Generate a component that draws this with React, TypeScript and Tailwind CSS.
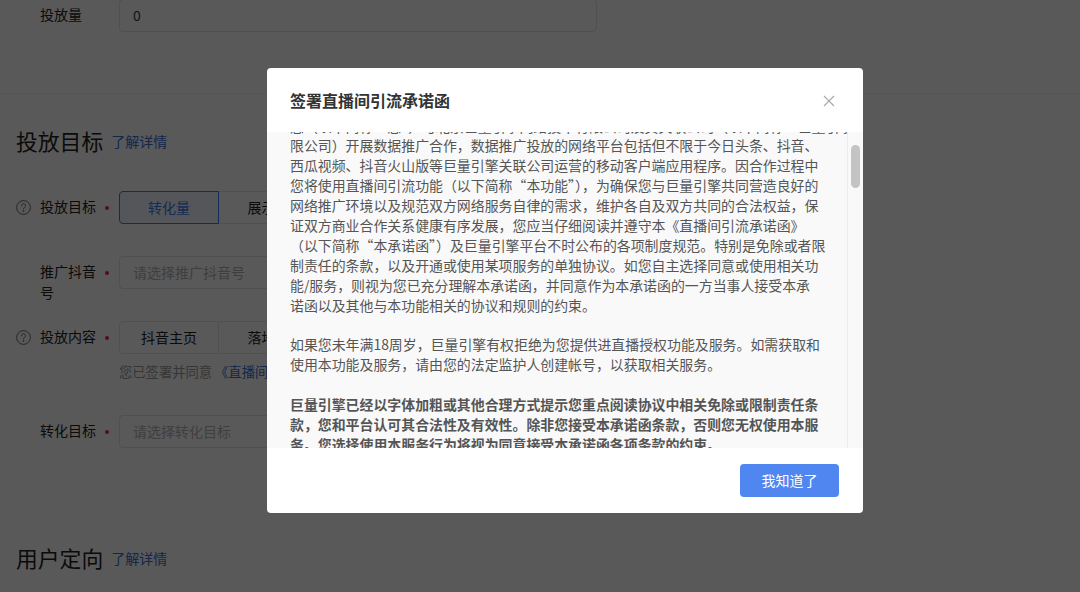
import React from "react";

const font = { fontFamily: '"Noto Sans CJK SC", "Noto Sans", sans-serif' };

const Q = () => (
  <svg width="15" height="15" viewBox="0 0 15 15" fill="none" stroke="#6f6f6f" strokeWidth="1" className="shrink-0">
    <circle cx="7.5" cy="7.5" r="6.9" />
    <path d="M5.4 5.9c0-1.2.9-2.1 2.1-2.1s2.1.8 2.1 1.9c0 1.5-2.1 1.5-2.1 3.2" strokeLinecap="round" />
    <circle cx="7.5" cy="11" r=".5" fill="#6f6f6f" />
  </svg>
);

function Row({ help, label, children, className, noDot }: { help?: boolean; label: string; children: React.ReactNode; className?: string; noDot?: boolean }) {
  return (
    <div className={"flex items-start h-[33px] " + (className ?? "")}>
      <div className="w-6 h-[33px] flex items-center">{help && <Q />}</div>
      <div className="w-[57px] text-[14px] leading-[21px] pt-[5px] text-[#222]">{label}</div>
      <div className="w-[22px] h-[33px] flex items-center">
        {!noDot && <span className="ml-2 w-[4px] h-[4px] rounded-full bg-[#e0284a]" />}
      </div>
      {children}
    </div>
  );
}

const Seg = ({ a, b, active }: { a: string; b: string; active?: boolean }) => (
  <div className="flex w-[478px] h-[33px] text-[14px] text-[#222]">
    <div className={active ? "w-[100px] flex items-center justify-center rounded-l-[4px] border border-[#3a7bf0] text-[#3a7bf0] bg-[#f2f6ff]" : "w-[100px] flex items-center justify-center rounded-l-[4px] border border-[#e4e4e4]"}>{a}</div>
    <div className="w-[100px] flex items-center justify-center border border-l-0 border-[#e4e4e4]">{b}</div>
  </div>
);

const Input = ({ text, value }: { text: string; value?: boolean }) => (
  <div className={"w-[478px] h-[33px] flex items-center px-[13px] rounded-[4px] border border-[#e4e4e4] text-[14px] " + (value ? "text-[#333]" : "text-[#b4b4b4]")}>{text}</div>
);

const Heading = ({ text, className }: { text: string; className?: string }) => (
  <div className={"flex items-center h-[30px] " + (className ?? "")}>
    <span className="text-[21.8px] leading-[30px] text-[#222]">{text}</span>
    <span className="ml-[8px] text-[14px] text-[#3a6fd8]">了解详情</span>
  </div>
);

const p1 = [
  "限公司）开展数据推广合作，数据推广投放的网络平台包括但不限于今日头条、抖音、",
  "西瓜视频、抖音火山版等巨量引擎关联公司运营的移动客户端应用程序。因合作过程中",
  "您将使用直播间引流功能（以下简称“本功能”），为确保您与巨量引擎共同营造良好的",
  "网络推广环境以及规范双方网络服务自律的需求，维护各自及双方共同的合法权益，保",
  "证双方商业合作关系健康有序发展，您应当仔细阅读并遵守本《直播间引流承诺函》",
  "（以下简称“本承诺函”）及巨量引擎平台不时公布的各项制度规范。特别是免除或者限",
  "制责任的条款，以及开通或使用某项服务的单独协议。如您自主选择同意或使用相关功",
  "能/服务，则视为您已充分理解本承诺函，并同意作为本承诺函的一方当事人接受本承",
  "诺函以及其他与本功能相关的协议和规则的约束。",
];
const p2 = [
  "如果您未年满18周岁，巨量引擎有权拒绝为您提供进直播授权功能及服务。如需获取和",
  "使用本功能及服务，请由您的法定监护人创建帐号，以获取相关服务。",
];
const p3 = [
  "巨量引擎已经以字体加粗或其他合理方式提示您重点阅读协议中相关免除或限制责任条",
  "款，您和平台认可其合法性及有效性。除非您接受本承诺函条款，否则您无权使用本服",
  "务。您选择使用本服务行为将视为同意接受本承诺函各项条款的约束。",
];

const Lines = ({ lines, className }: { lines: string[]; className?: string }) => (
  <div className={className}>
    {lines.map((l) => (
      <div key={l} className="whitespace-nowrap">{l}</div>
    ))}
  </div>
);

export default function App() {
  return (
    <div style={font} className="relative w-[1080px] h-[592px] overflow-hidden bg-white">
      <div className="-mt-px pl-4">
        <div className="h-[95px] border-b border-[#f0f0f0] -ml-4 pl-4">
          <Row label="投放量" noDot>
            <Input text="0" value />
          </Row>
        </div>
        <Heading text="投放目标" className="mt-[32px]" />
        <Row help label="投放目标" className="mt-[35px]"><Seg a="转化量" b="展示量" active /></Row>
        <Row label="推广抖音号" className="mt-8"><Input text="请选择推广抖音号" /></Row>
        <Row help label="投放内容" className="mt-8"><Seg a="抖音主页" b="落地页" /></Row>
        <div className="ml-[103px] mt-[8px] h-[20px] text-[13.3px] leading-[20px] text-[#9a9a9a] whitespace-nowrap">
          您已签署并同意<span className="ml-[3px] text-[#3a6fd8]">《直播间引流承诺函》</span>
        </div>
        <Row label="转化目标" className="mt-[33px]"><Input text="请选择转化目标" /></Row>
        <Heading text="用户定向" className="mt-[95px]" />
      </div>

      <div className="absolute inset-0 bg-black/65">
        <div className="ml-[267px] mt-[68px] w-[596px] h-[445px] rounded-[4px] bg-white flex flex-col overflow-hidden">
          <div className="h-16 shrink-0 flex items-center justify-between pl-[23px] pr-[28px]">
            <span className="text-[16px] font-bold text-[#333]">签署直播间引流承诺函</span>
            <svg width="12" height="12" viewBox="0 0 12 12" stroke="#a8a8a8" strokeWidth="1.1" className="mt-[2px]">
              <path d="M1 1l10 10M11 1L1 11" />
            </svg>
          </div>
          <div className="flex h-[316px] shrink-0 bg-[#f9f9f9] overflow-hidden">
            <div className="flex-1 overflow-hidden pl-[23px] -mt-[16px] text-[13.92px] leading-[20px] text-[#555]">
              <Lines className="h-[19px]" lines={["您（以下简称“您”）与北京巨量引擎网络技术有限公司及其关联公司（以下简称“巨量引擎有"]} />
              <Lines lines={p1} />
              <Lines lines={p2} className="mt-[19px]" />
              <Lines lines={p3} className="mt-[20px] font-bold" />
            </div>
            <div className="w-4 shrink-0 border-l border-[#ececec] pt-[13px] pl-[3px]">
              <div className="w-[9px] h-[43px] rounded-full bg-[#c4c4c4]" />
            </div>
          </div>
          <div className="flex-1 flex items-start justify-end pt-4 pr-6">
            <div className="w-[99px] h-[33px] rounded-[4px] bg-[#5086f0] text-white text-[14px] flex items-center justify-center">我知道了</div>
          </div>
        </div>
      </div>
    </div>
  );
}
